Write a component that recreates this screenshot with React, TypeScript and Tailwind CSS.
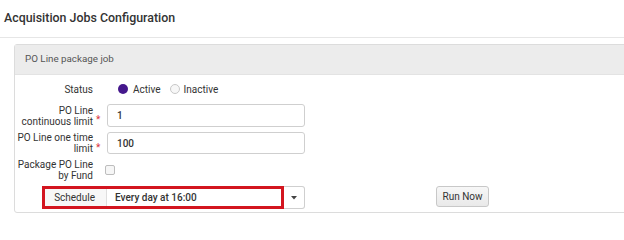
export default function App() {
  return (
    <div className="h-[215px] w-[624px] overflow-hidden bg-white font-['Roboto',sans-serif] text-[#333]">
      <div className="flex h-[38px] items-center border-b border-[#e6e6e6] pl-[4px]">
        <h1 className="text-[12.4px] font-medium text-[#333]">Acquisition Jobs Configuration</h1>
      </div>

      <div className="mt-[6px] ml-[14px] w-[640px] rounded-[3px] border border-[#dcdcdc]">
        <div className="flex h-[30px] items-center border-b border-[#e3e3e3] bg-[#ececec] px-[10px] text-[9.8px] text-[#555]">
          PO Line package job
        </div>

        <div className="flex flex-col pt-[5px] pb-[3px] text-[10px]">
          <div className="grid h-[18px] grid-cols-[78px_14px_auto] items-center">
            <div className="text-right">Status</div>
            <div />
            <div className="flex items-center pl-[11px]">
              <span className="h-[10px] w-[10px] rounded-full bg-[#45188c]" />
              <span className="ml-[5px]">Active</span>
              <span className="ml-[9px] h-[10px] w-[10px] rounded-full border border-[#c8c8c8] bg-[#f7f7f7]" />
              <span className="ml-[4px]">Inactive</span>
            </div>
          </div>

          <div className="mt-[6px] grid h-[23px] grid-cols-[78px_14px_198px]">
            <div className="self-center whitespace-nowrap text-right leading-[11px]">
              PO Line
              <br />
              continuous limit
            </div>
            <div className="self-end pb-[2px] pl-[3px] leading-[11px] text-[#d9363e]">*</div>
            <div className="flex items-center rounded-[3px] border border-[#cfcfcf] pl-[9px] font-medium">1</div>
          </div>

          <div className="mt-[5px] grid h-[22px] grid-cols-[78px_14px_198px]">
            <div className="self-center whitespace-nowrap text-right leading-[11px]">
              PO Line one time
              <br />
              limit
            </div>
            <div className="self-end pb-[1px] pl-[3px] leading-[11px] text-[#d9363e]">*</div>
            <div className="flex items-center rounded-[3px] border border-[#cfcfcf] pl-[9px] font-medium">100</div>
          </div>

          <div className="mt-[5px] grid h-[22px] grid-cols-[78px_12px_auto]">
            <div className="self-center whitespace-nowrap text-right leading-[11px]">
              Package PO Line
              <br />
              by Fund
            </div>
            <div />
            <div className="flex items-center">
              <span className="h-[10px] w-[10px] rounded-[2px] border border-[#bdbdbd] bg-[#f6f6f6]" />
            </div>
          </div>

          <div className="mt-[5px] flex h-[23px] items-stretch pl-[27px]">
            <div className="flex w-[242px] border-[3px] border-[#d3151f]">
              <div className="flex w-[62px] items-center justify-end border-r border-[#dedede] bg-[#f7f7f7] pr-[11px]">
                Schedule
              </div>
              <div className="flex flex-1 items-center pl-[8px] font-medium">Every day at 16:00</div>
            </div>
            <div className="flex w-[21px] items-center justify-center rounded-r-[3px] border border-l-0 border-[#cfcfcf]">
              <svg width="6" height="4" viewBox="0 0 6 4">
                <path d="M0 0h6L3 3.5z" fill="#444" />
              </svg>
            </div>
            <button className="ml-[131px] h-[21px] w-[53px] rounded-[3px] border border-[#c8c8c8] bg-gradient-to-b from-[#f7f7f7] to-[#e9e9e9] text-[10px] text-[#333]">
              Run Now
            </button>
          </div>
        </div>
      </div>
    </div>
  )
}
